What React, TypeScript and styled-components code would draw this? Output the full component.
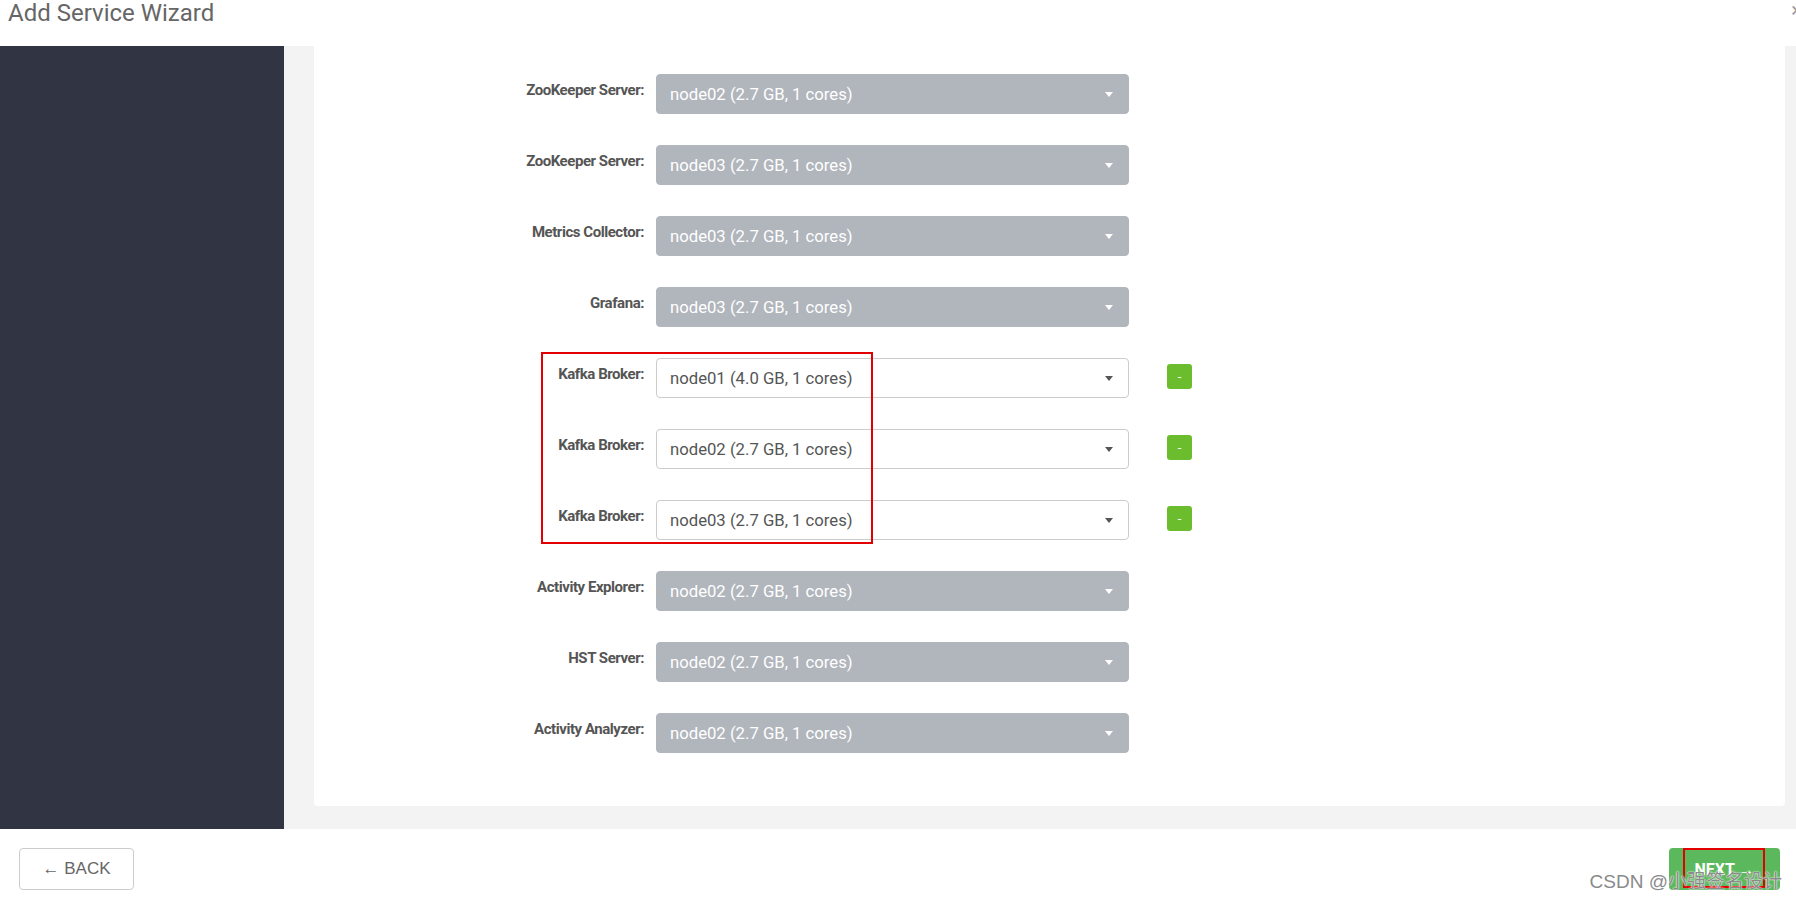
import styled, { createGlobalStyle } from 'styled-components';

const GlobalStyle = createGlobalStyle`
    body {
        margin: 0;
        font-family: Roboto, 'Liberation Sans', sans-serif;
        background: #fff;
        overflow: hidden;
    }
`;

const Page = styled.div`
    width: 1796px;
    height: 900px;
    display: flex;
    flex-direction: column;
    position: relative;
    overflow: hidden;
`;

const Header = styled.div`
    height: 46px;
    flex-shrink: 0;
    position: relative;
`;

const Title = styled.h3`
    margin: 0;
    padding-left: 8px;
    font-size: 24px;
    line-height: 26px;
    font-weight: 400;
    color: #666;
`;

const Close = styled.span`
    position: absolute;
    top: -2px;
    right: -6px;
    font-size: 20px;
    color: #999;
`;

const Body = styled.div`
    flex: 1;
    display: flex;
    min-height: 0;
`;

const Sidebar = styled.div`
    width: 284px;
    flex-shrink: 0;
    background: #313543;
`;

const Content = styled.div`
    flex: 1;
    background: #f3f3f3;
    padding: 0 11px 23px 30px;
    display: flex;
`;

const Card = styled.div`
    flex: 1;
    background: #fff;
    border-radius: 0 0 4px 4px;
    padding-top: 28px;
    position: relative;
`;

const Row = styled.div`
    display: flex;
    align-items: flex-start;
    padding-left: 200px;
    margin-bottom: 31px;
`;

const Label = styled.label`
    width: 142px;
    box-sizing: border-box;
    padding: 8px 12px 0 0;
    text-align: right;
    font-size: 15px;
    line-height: 17px;
    font-weight: 700;
    letter-spacing: -0.45px;
    color: #555;
`;

const Select = styled.div<{ $editable: boolean }>`
    width: 473px;
    height: 40px;
    box-sizing: border-box;
    display: flex;
    align-items: center;
    padding: 0 12px 0 13px;
    border-radius: 4px;
    font-size: 16.7px;
    background: ${p => (p.$editable ? '#fff' : '#b1b5bc')};
    border: 1px solid ${p => (p.$editable ? '#ccc' : '#b1b5bc')};
    color: ${p => (p.$editable ? '#555' : '#fff')};
`;

const Caret = styled.span<{ $editable: boolean }>`
    margin-left: auto;
    margin-right: 3px;
    border-left: 4px solid transparent;
    border-right: 4px solid transparent;
    border-top: 5px solid ${p => (p.$editable ? '#555' : '#fff')};
`;

const MinusButton = styled.button`
    margin: 6px 0 0 38px;
    width: 25px;
    height: 25px;
    padding: 0;
    border: none;
    border-radius: 3px;
    background: #6bbd2d;
    color: #fff;
    font-size: 13px;
    line-height: 25px;
    font-family: inherit;
`;

const Highlight = styled.div`
    position: absolute;
    left: 227px;
    top: 306px;
    width: 332px;
    height: 192px;
    box-sizing: border-box;
    border: 2.5px solid #e30000;
    pointer-events: none;
`;

const Footer = styled.div`
    height: 71px;
    flex-shrink: 0;
    display: flex;
    justify-content: space-between;
    align-items: flex-start;
    padding: 19px 16px 0 19px;
    box-sizing: border-box;
    position: relative;
`;

const BackButton = styled.button`
    width: 115px;
    height: 42px;
    background: #fff;
    border: 1px solid #ccc;
    border-radius: 4px;
    color: #666;
    font-size: 17px;
    font-family: 'Liberation Sans', Roboto, sans-serif;
`;

const NextButton = styled.button`
    width: 111px;
    height: 42px;
    background: #5cb85c;
    border: none;
    border-radius: 4px;
    color: #fff;
    font-size: 16px;
    font-weight: 700;
    font-family: inherit;
    position: relative;
`;

const NextMark = styled.span`
    position: absolute;
    left: 14px;
    top: 0;
    width: 82px;
    height: 40px;
    box-sizing: border-box;
    border: 2.5px solid #e30000;
`;

const Watermark = styled.span`
    position: absolute;
    right: 14px;
    bottom: 7px;
    font-size: 19px;
    color: #8a8a8a;
    font-family: 'Liberation Sans', 'Noto Sans CJK SC', sans-serif;
    text-shadow: 0 0 2px #fff, 0 0 1px #fff;
`;

interface Host {
    label: string;
    value: string;
    removable?: boolean;
}

const hosts: Host[] = [
    { label: 'ZooKeeper Server:', value: 'node02 (2.7 GB, 1 cores)' },
    { label: 'ZooKeeper Server:', value: 'node03 (2.7 GB, 1 cores)' },
    { label: 'Metrics Collector:', value: 'node03 (2.7 GB, 1 cores)' },
    { label: 'Grafana:', value: 'node03 (2.7 GB, 1 cores)' },
    { label: 'Kafka Broker:', value: 'node01 (4.0 GB, 1 cores)', removable: true },
    { label: 'Kafka Broker:', value: 'node02 (2.7 GB, 1 cores)', removable: true },
    { label: 'Kafka Broker:', value: 'node03 (2.7 GB, 1 cores)', removable: true },
    { label: 'Activity Explorer:', value: 'node02 (2.7 GB, 1 cores)' },
    { label: 'HST Server:', value: 'node02 (2.7 GB, 1 cores)' },
    { label: 'Activity Analyzer:', value: 'node02 (2.7 GB, 1 cores)' },
];

export default function App() {
    return (
        <Page>
            <GlobalStyle />
            <Header>
                <Title>Add Service Wizard</Title>
                <Close>×</Close>
            </Header>

            <Body>
                <Sidebar />
                <Content>
                    <Card>
                        {hosts.map((h, i) => (
                            <Row key={i}>
                                <Label>{h.label}</Label>
                                <Select $editable={!!h.removable}>
                                    {h.value}
                                    <Caret $editable={!!h.removable} />
                                </Select>
                                {h.removable && <MinusButton>-</MinusButton>}
                            </Row>
                        ))}
                        <Highlight />
                    </Card>
                </Content>
            </Body>

            <Footer>
                <BackButton>← BACK</BackButton>
                <NextButton>
                    NEXT →
                    <NextMark />
                </NextButton>
                <Watermark>CSDN @小强签名设计</Watermark>
            </Footer>
        </Page>
    );
}
